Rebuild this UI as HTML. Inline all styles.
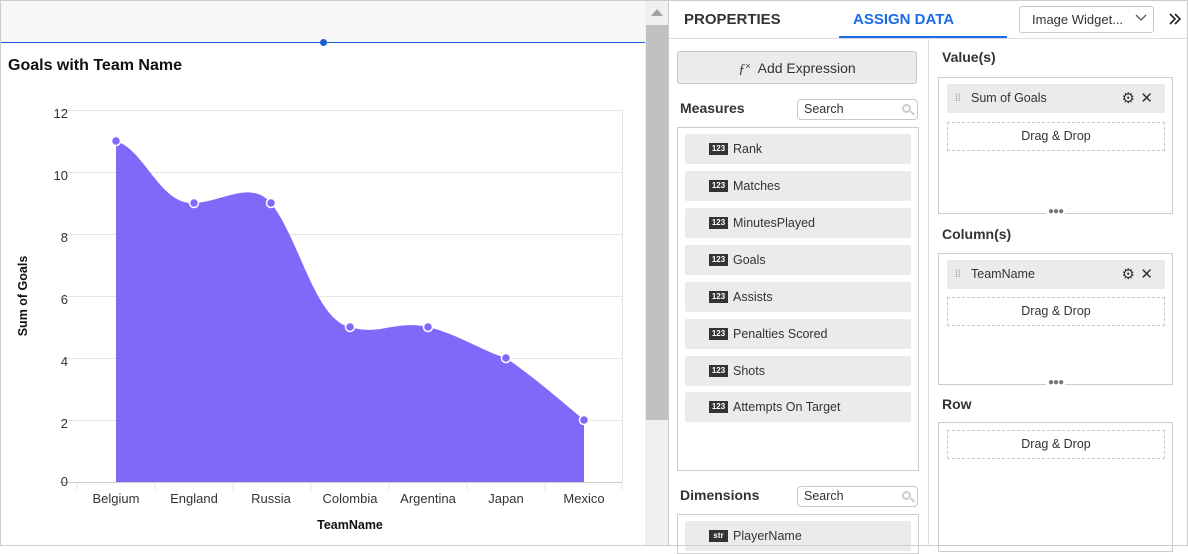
<!DOCTYPE html><html><head><style>
*{box-sizing:border-box;margin:0;padding:0}
body{width:1188px;height:546px;overflow:hidden;background:#fff;font-family:"Liberation Sans",Arial,sans-serif;position:relative;color:#333}
.a{position:absolute}
.item{position:absolute;left:685px;width:226px;height:30px;background:#ebebeb;border-radius:2px;font-size:12.5px;color:#333;line-height:30px;padding-left:48px}
.ic{position:absolute;left:24px;top:9px;width:19px;height:12px;background:#333;color:#fff;font-size:8px;font-weight:bold;line-height:12px;text-align:center}
.pill{position:absolute;left:947px;width:218px;height:29px;background:#ebebeb;font-size:12.5px;line-height:29px;padding-left:24px}
.dd{position:absolute;left:947px;width:218px;height:29px;border:1px dashed #c8c8c8;font-size:12.5px;text-align:center;line-height:27px}
.box{position:absolute;border:1px solid #ccc}
.lbl{position:absolute;font-size:14px;font-weight:bold;color:#333}
.srch{position:absolute;left:797px;width:121px;height:21px;border:1px solid #c8c8c8;border-radius:4px;font-size:12.5px;line-height:19px;padding-left:6px}
.mg{position:absolute;right:6px;top:4px;width:9px;height:9px;border:2px solid #ccc;border-radius:50%}
.mg:after{content:"";position:absolute;left:6px;top:6px;width:5px;height:2px;background:#ccc;transform:rotate(45deg)}
</style></head><body>
<div class="a" style="left:1px;top:1px;width:644px;height:42px;background:#f7f7f7"></div>
<div class="a" style="left:1px;top:42px;width:644px;height:1px;background:#1a5fd8"></div>
<div class="a" style="left:320px;top:39px;width:7px;height:7px;border-radius:50%;background:#1a5fd8"></div>
<div class="a" style="left:8px;top:57px;font-size:16px;font-weight:bold;color:#111">Goals with Team Name</div>
<svg class="a" style="left:0;top:0" width="645" height="546">
<g stroke="#e6e6e6" stroke-width="1">
<line x1="60" y1="110.5" x2="622" y2="110.5"/><line x1="60" y1="172.5" x2="622" y2="172.5"/><line x1="60" y1="234.5" x2="622" y2="234.5"/><line x1="60" y1="296.5" x2="622" y2="296.5"/><line x1="60" y1="358.5" x2="622" y2="358.5"/><line x1="60" y1="420.5" x2="622" y2="420.5"/>
<line x1="622.5" y1="110" x2="622.5" y2="482"/>
<line x1="77" y1="482" x2="77" y2="490"/><line x1="155" y1="482" x2="155" y2="490"/><line x1="233" y1="482" x2="233" y2="490"/><line x1="311" y1="482" x2="311" y2="490"/><line x1="389" y1="482" x2="389" y2="490"/><line x1="467" y1="482" x2="467" y2="490"/><line x1="545" y1="482" x2="545" y2="490"/><line x1="622" y1="482" x2="622" y2="490"/>
</g>
<line x1="60" y1="482.5" x2="622" y2="482.5" stroke="#ccc"/>
<path d="M116,141 C145,150 160,205 194,203 C225,201 250,180 271,203 C300,240 315,320 350,327 C380,336 395,320 428,327 C460,335 480,350 506,358 C535,378 560,400 584,420 L584,482 L116,482 Z" fill="#7f69f8"/>
<g fill="#7f69f8" stroke="#fff" stroke-width="1.5">
<circle cx="116" cy="141" r="4.5"/><circle cx="194" cy="203" r="4.5"/><circle cx="271" cy="203" r="4.5"/><circle cx="350" cy="327" r="4.5"/><circle cx="428" cy="327" r="4.5"/><circle cx="506" cy="358" r="4.5"/><circle cx="584" cy="420" r="4.5"/></g>
<g font-size="13" fill="#333" text-anchor="end" font-family="Liberation Sans">
<text x="68" y="118">12</text><text x="68" y="180">10</text><text x="68" y="242">8</text><text x="68" y="304">6</text><text x="68" y="366">4</text><text x="68" y="428">2</text><text x="68" y="486">0</text></g>
<g font-size="13" fill="#333" text-anchor="middle" font-family="Liberation Sans">
<text x="116" y="503">Belgium</text><text x="194" y="503">England</text><text x="271" y="503">Russia</text><text x="350" y="503">Colombia</text><text x="428" y="503">Argentina</text><text x="506" y="503">Japan</text><text x="584" y="503">Mexico</text>
<text x="350" y="529" font-weight="bold" font-size="12.5" fill="#111">TeamName</text>
<text transform="translate(27,296) rotate(-90)" font-weight="bold" font-size="12.5" fill="#111">Sum of Goals</text></g>
</svg>
<div class="a" style="left:645px;top:1px;width:23px;height:545px;background:#f0f0f0"></div>
<div class="a" style="left:646px;top:25px;width:22px;height:395px;background:#c1c1c1"></div>
<div class="a" style="left:651px;top:9px;width:0;height:0;border-left:6px solid transparent;border-right:6px solid transparent;border-bottom:7px solid #a0a0a0"></div>
<div class="a" style="left:668px;top:1px;width:1px;height:545px;background:#ccc"></div>
<div class="a" style="left:669px;top:38px;width:518px;height:1px;background:#ddd"></div>
<div class="a" style="left:684px;top:11px;font-size:15px;font-weight:bold;color:#333">PROPERTIES</div>
<div class="a" style="left:853px;top:11px;font-size:15px;font-weight:bold;color:#1a6ce8">ASSIGN DATA</div>
<div class="a" style="left:839px;top:36px;width:168px;height:2px;background:#1a6ce8"></div>
<div class="a" style="left:1019px;top:6px;width:135px;height:27px;border:1px solid #c8c8c8;border-radius:3px;font-size:13px;line-height:25px;padding-left:12px;color:#333">Image Widget...</div>
<svg class="a" style="left:1135px;top:14px" width="12" height="8"><path d="M1,1 L6,6 L11,1" fill="none" stroke="#555" stroke-width="1.3"/></svg>
<svg class="a" style="left:1168px;top:12px" width="14" height="14"><path d="M2,2 L7,7 L2,12 M7,2 L12,7 L7,12" fill="none" stroke="#222" stroke-width="1.6"/></svg>
<div class="a" style="left:928px;top:39px;width:1px;height:507px;background:#ddd"></div>
<div class="a" style="left:677px;top:51px;width:240px;height:33px;background:#ebebeb;border:1px solid #c8c8c8;border-radius:3px;text-align:center;font-size:14px;line-height:29px;color:#333"><i style="font-family:'Liberation Serif'">ƒ</i><span style="font-size:9px;vertical-align:4px">×</span>&nbsp; Add Expression</div>
<div class="lbl" style="left:680px;top:100px">Measures</div>
<div class="srch" style="top:99px">Search<span class="mg"></span></div>
<div class="box" style="left:677px;top:127px;width:242px;height:344px"></div>
<div class="item" style="top:134px"><span class="ic">123</span>Rank</div>
<div class="item" style="top:171px"><span class="ic">123</span>Matches</div>
<div class="item" style="top:208px"><span class="ic">123</span>MinutesPlayed</div>
<div class="item" style="top:245px"><span class="ic">123</span>Goals</div>
<div class="item" style="top:282px"><span class="ic">123</span>Assists</div>
<div class="item" style="top:319px"><span class="ic">123</span>Penalties Scored</div>
<div class="item" style="top:356px"><span class="ic">123</span>Shots</div>
<div class="item" style="top:392px"><span class="ic">123</span>Attempts On Target</div>
<div class="lbl" style="left:680px;top:487px">Dimensions</div>
<div class="srch" style="top:486px">Search<span class="mg"></span></div>
<div class="box" style="left:677px;top:514px;width:242px;height:40px"></div>
<div class="item" style="top:521px"><span class="ic">str</span>PlayerName</div>
<div class="lbl" style="left:942px;top:49px">Value(s)</div>
<div class="box" style="left:938px;top:77px;width:235px;height:137px"></div>
<div class="pill" style="top:84px"><span style="position:absolute;left:8px;color:#888;font-size:10px">⁞⁞</span>Sum of Goals<span style="position:absolute;right:30px;font-size:15px">⚙</span><span style="position:absolute;right:12px;font-size:15px">✕</span></div>
<div class="dd" style="top:122px">Drag &amp; Drop</div>
<div class="a" style="left:1046px;top:206px;font-size:10px;color:#777;background:#fff;padding:0 2px;letter-spacing:-1px">●●●</div>
<div class="lbl" style="left:942px;top:226px">Column(s)</div>
<div class="box" style="left:938px;top:253px;width:235px;height:132px"></div>
<div class="pill" style="top:260px"><span style="position:absolute;left:8px;color:#888;font-size:10px">⁞⁞</span>TeamName<span style="position:absolute;right:30px;font-size:15px">⚙</span><span style="position:absolute;right:12px;font-size:15px">✕</span></div>
<div class="dd" style="top:297px">Drag &amp; Drop</div>
<div class="a" style="left:1046px;top:377px;font-size:10px;color:#777;background:#fff;padding:0 2px;letter-spacing:-1px">●●●</div>
<div class="lbl" style="left:942px;top:396px">Row</div>
<div class="box" style="left:938px;top:422px;width:235px;height:130px"></div>
<div class="dd" style="top:430px">Drag &amp; Drop</div>
<div class="a" style="left:0;top:0;width:1188px;height:546px;border:1px solid #ccc;pointer-events:none"></div>
</body></html>
